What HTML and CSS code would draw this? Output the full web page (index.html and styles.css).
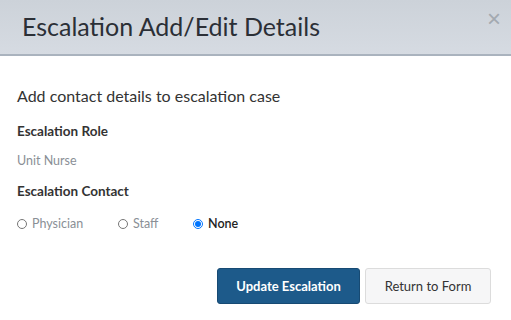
FILE: index.html
```html
<!DOCTYPE html>
<html lang="en">
<head>
    <meta charset="UTF-8">
    <meta name="viewport" content="width=device-width, initial-scale=1.0">
    <title>Escalation Add/Edit Details</title>
    <link rel="stylesheet" href="styles.css">
</head>
<body>
    <div class="modal">
        <header class="modal-header">
            <h1>Escalation Add/Edit Details</h1>
            <button class="close" type="button">&times;</button>
        </header>

        <main class="modal-body">
            <p class="intro">Add contact details to escalation case</p>

            <h2>Escalation Role</h2>
            <p class="value">Unit Nurse</p>

            <h2>Escalation Contact</h2>
            <div class="radios">
                <label class="radio"><input type="radio" name="contact"> Physician</label>
                <label class="radio"><input type="radio" name="contact"> Staff</label>
                <label class="radio checked"><input type="radio" name="contact" checked> None</label>
            </div>
        </main>

        <footer class="modal-footer">
            <button class="btn btn-primary" type="button">Update Escalation</button>
            <button class="btn btn-default" type="button">Return to Form</button>
        </footer>
    </div>
</body>
</html>
```

FILE: styles.css
```css
body {
    font-family: Lato, "Open Sans", sans-serif;
    margin: 0;
    padding: 0;
    background-color: #ffffff;
    color: #333333;
}

.modal {
    width: 511px;
    height: 320px;
    display: flex;
    flex-direction: column;
}

.modal-header {
    height: 54px;
    display: flex;
    align-items: center;
    justify-content: space-between;
    padding: 0 10px 0 22px;
    background: linear-gradient(#ccd2d9, #d6dbe2);
    border-bottom: 2px solid #aab3be;
}

.modal-header h1 {
    margin: 0 0 2px;
    font-size: 25px;
    font-weight: 400;
    color: #2b2f36;
}

.close {
    align-self: flex-start;
    margin-top: 5px;
    background: none;
    border: none;
    font-family: Arial, sans-serif;
    font-size: 24px;
    color: #a3a9b0;
    padding: 0;
    cursor: pointer;
}

.modal-body {
    padding: 30px 17px 0;
}

.intro {
    margin: 0 0 18px;
    font-size: 16px;
}

.modal-body h2 {
    margin: 0;
    font-size: 13.5px;
    font-weight: 700;
    color: #333333;
}

.value {
    margin: 14px 0 15px;
    font-size: 12.5px;
    color: #8a8f96;
}

.radios {
    display: flex;
    margin-top: 17px;
}

.radio {
    display: flex;
    align-items: center;
    font-size: 12.5px;
    color: #8a8f96;
}

.radio:nth-child(1) {
    width: 101px;
}

.radio:nth-child(2) {
    width: 75px;
}

.radio input {
    margin: 0 5px 0 0;
    width: 10px;
    height: 10px;
}

.radio.checked {
    color: #222222;
    font-weight: 600;
}

.modal-footer {
    display: flex;
    justify-content: flex-end;
    gap: 5px;
    margin-top: auto;
    padding: 0 20px 16px;
}

.btn {
    height: 36px;
    border-radius: 3px;
    font-family: Lato, sans-serif;
    font-size: 13px;
    cursor: pointer;
}

.btn-primary {
    width: 143px;
    background-color: #1d5a8a;
    border: 1px solid #174a73;
    color: #ffffff;
    font-weight: 700;
}

.btn-default {
    width: 126px;
    background-color: #f6f6f7;
    border: 1px solid #dcdcdc;
    color: #333333;
}
```
